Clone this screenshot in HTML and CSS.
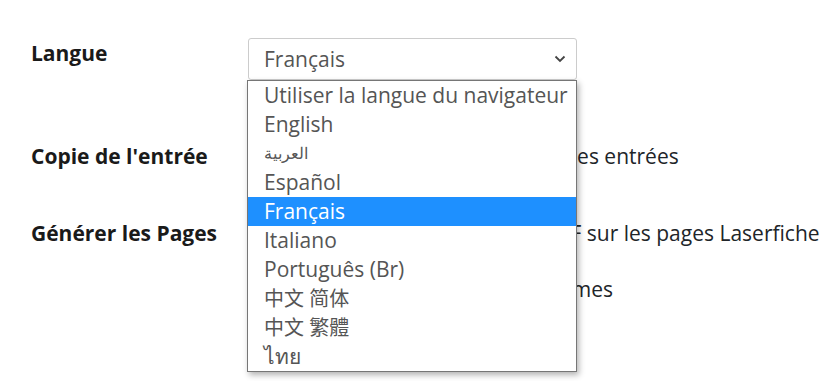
FILE: index.html
```html
<!DOCTYPE html>
<html lang="fr">
<head>
    <meta charset="UTF-8">
    <title>Paramètres</title>
    <link rel="stylesheet" href="styles.css">
</head>
<body>
    <div class="settings">
        <div class="row row-lang">
            <div class="label">Langue</div>
            <div class="field">
                <div class="select-wrap">
                    <div class="select">
                        <span>Français</span>
                        <svg class="chevron" width="12" height="8" viewBox="0 0 12 8"><path d="M1.5 1.5 L6 6 L10.5 1.5" fill="none" stroke="#444" stroke-width="1.8"/></svg>
                    </div>
                    <ul class="options">
                        <li>Utiliser la langue du navigateur</li>
                        <li>English</li>
                        <li class="arabic" dir="rtl">العربية</li>
                        <li>Español</li>
                        <li class="selected">Français</li>
                        <li>Italiano</li>
                        <li>Português (Br)</li>
                        <li class="cjk">中文 简体</li>
                        <li class="cjk-tc">中文 繁體</li>
                        <li>ไทย</li>
                    </ul>
                </div>
            </div>
        </div>

        <div class="row row-copy">
            <div class="label">Copie de l'entrée</div>
            <div class="field">
                <label class="opt"><input type="checkbox"> Envoyer une copie par courriel des entrées</label>
            </div>
        </div>

        <div class="row row-pages">
            <div class="label">Générer les Pages</div>
            <div class="field">
                <label class="opt"><input type="checkbox" checked> Enregistrer la soumission en PDF sur les pages Laserfiche</label>
                <label class="opt"><input type="checkbox"> Inclure les pièces jointes des formes</label>
            </div>
        </div>
    </div>
</body>
</html>
```

FILE: styles.css
```css
html, body {
    min-height: 100vh;
}

body {
    margin: 0;
    font-family: "Open Sans", "Noto Sans", sans-serif;
    color: #212529;
    background: #fff;
}

.settings {
    padding: 38px 0 0 31px;
}

.row {
    display: grid;
    grid-template-columns: 217px 1fr;
}

.label {
    font-weight: 700;
    font-size: 21px;
    line-height: 30px;
    color: #1a1a1a;
}

.row-lang {
    height: 103px;
}

.row-copy {
    height: 77px;
}

.field {
    display: flex;
    flex-direction: column;
    gap: 26px;
}

.opt {
    display: flex;
    align-items: center;
    gap: 0;
    margin: 0;
    font-size: 21px;
    line-height: 30px;
    white-space: nowrap;
}

.opt input {
    margin: 0;
    width: 12px;
    height: 12px;
}

.select-wrap {
    position: relative;
    width: 329px;
}

.select {
    height: 40px;
    border: 1px solid #ccc;
    border-radius: 3px;
    display: flex;
    align-items: center;
    justify-content: space-between;
    padding: 0 10px 0 15px;
    font-size: 21px;
    color: #555;
}

.options {
    position: absolute;
    top: 42px;
    left: -1px;
    width: 328px;
    margin: 0;
    padding: 0;
    list-style: none;
    background: #fff;
    border: 1px solid #767676;
    box-shadow: 2px 3px 6px rgba(0, 0, 0, 0.3);
    z-index: 2;
}

.options li {
    height: 29px;
    line-height: 29px;
    padding-left: 16px;
    font-size: 21px;
    color: #555;
    white-space: nowrap;
}

.options li.arabic {
    unicode-bidi: plaintext;
    text-align: left;
    font-size: 16px;
}

.options li.selected {
    background: #1e90ff;
    color: #fff;
}

.options li.cjk {
    font-family: "Open Sans", "Noto Sans CJK SC", sans-serif;
    font-size: 20px;
}

.options li.cjk-tc {
    font-family: "Open Sans", "Noto Sans CJK TC", sans-serif;
    font-size: 20px;
}
```
